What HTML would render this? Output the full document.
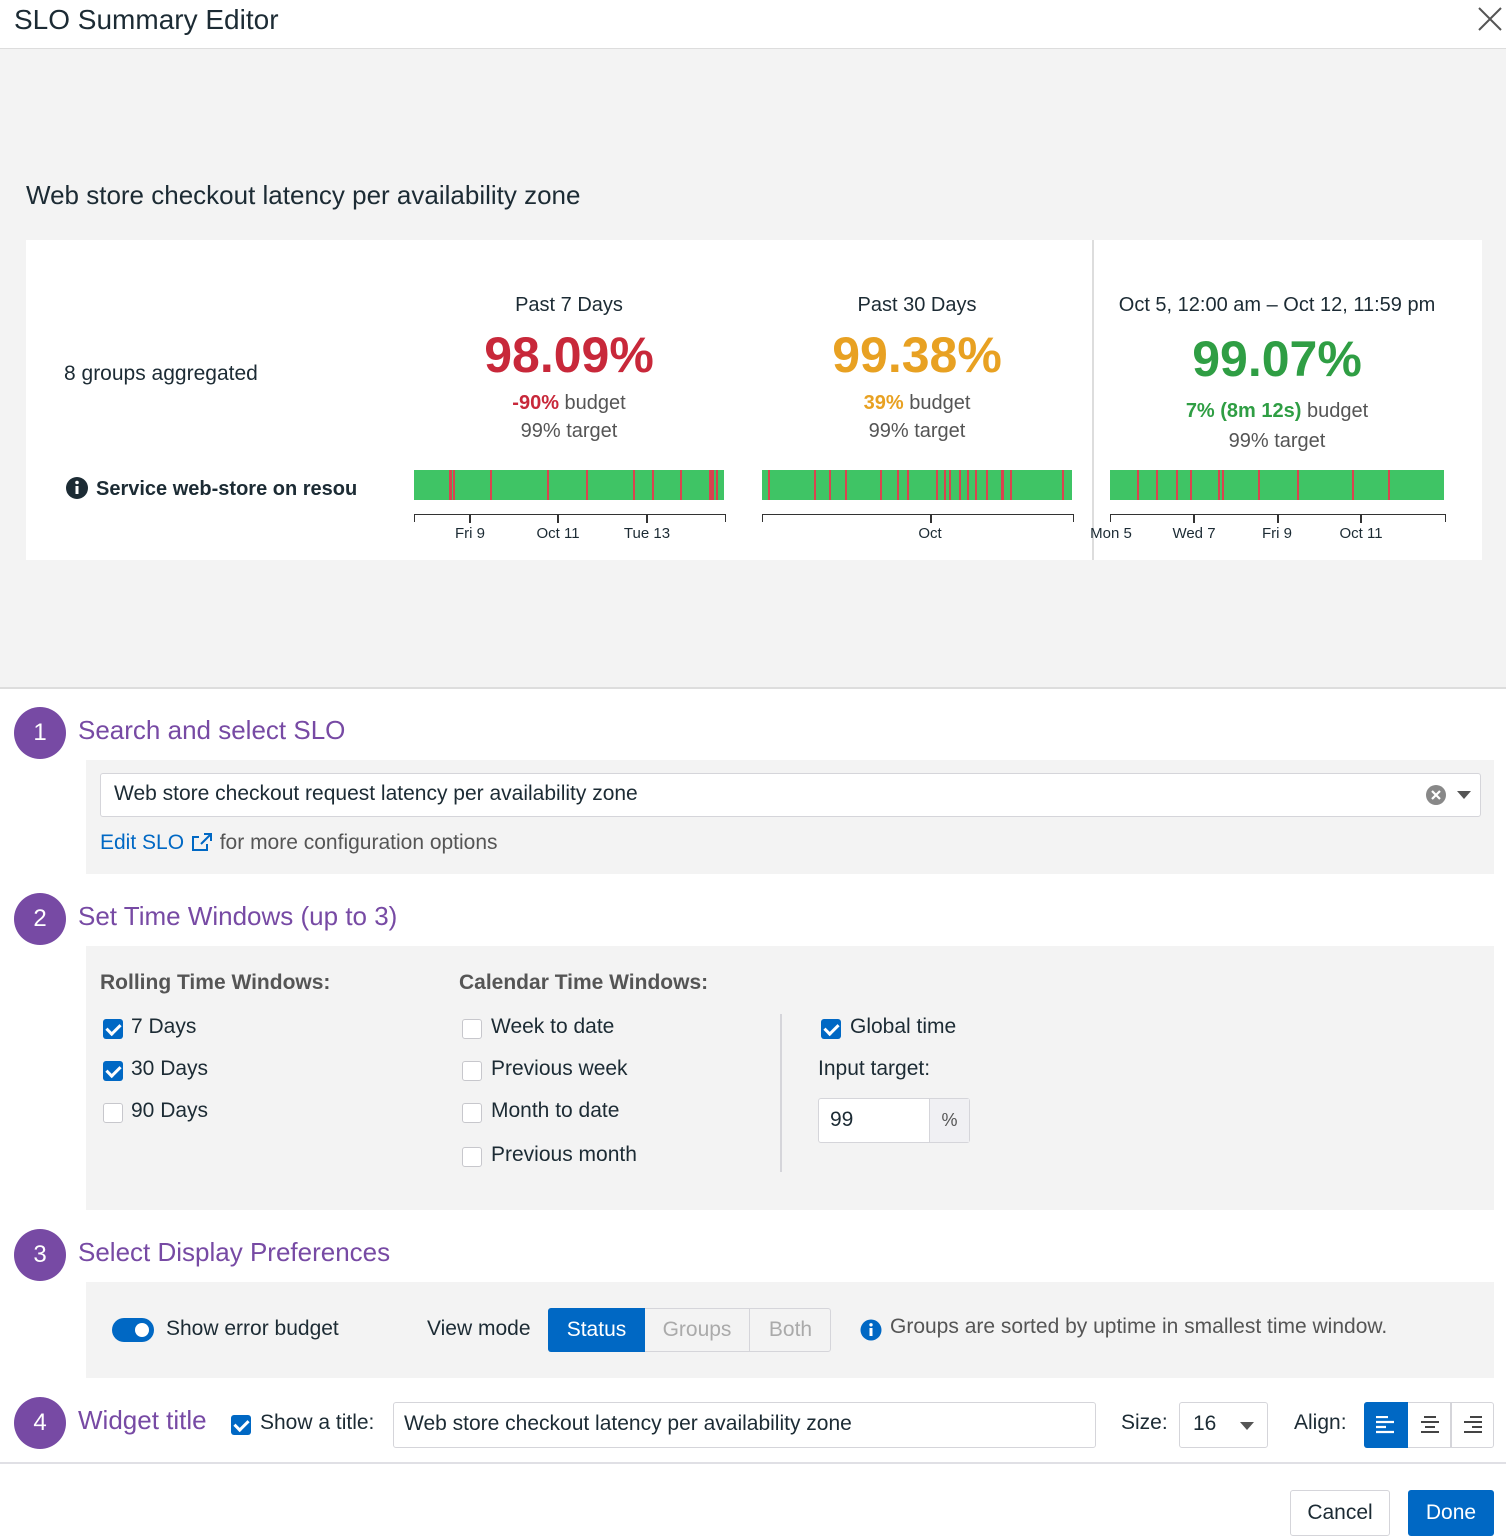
<!DOCTYPE html>
<html><head><meta charset="utf-8"><style>
*{box-sizing:border-box;margin:0;padding:0}
body{width:1506px;height:1536px;position:relative;background:#fff;font-family:"Liberation Sans",sans-serif;color:#1c2b34;overflow:hidden}
.a{position:absolute;white-space:nowrap}
.circ{position:absolute;width:52px;height:52px;border-radius:50%;background:#774aa4;color:#fff;font-size:24px;text-align:center;line-height:52px}
.sec{color:#774aa4;font-size:26px}
.grey{position:absolute;background:#f3f3f3}
.cb{position:absolute;width:20px;height:20px;border-radius:3px}
.cb.on{background:#0068c4}
.cb.on:after{content:"";position:absolute;left:6px;top:2px;width:6px;height:11px;border:solid #fff;border-width:0 3px 3px 0;transform:rotate(45deg)}
.cb.off{background:#fff;border:1.5px solid #c7c7cc}
.lbl{font-size:21px}
.bar{position:absolute;height:30px;background:#3fc465}
.bar i{position:absolute;top:0;height:30px;width:2px;background:#d9434f}
.ax{position:absolute;height:8px;border:1.5px solid #333;border-bottom:none}
.tk{position:absolute;top:0;width:1.5px;height:8px;background:#333}
.tl{position:absolute;font-size:15px;transform:translateX(-50%)}
</style></head><body>
<div class="a" style="left:14px;top:4px;font-size:28px">SLO Summary Editor</div>
<svg class="a" style="left:1477px;top:6px" width="26" height="26"><path d="M2 2L24 24M24 2L2 24" stroke="#555" stroke-width="2"/></svg>
<div class="grey" style="left:0;top:48px;width:1506px;height:641px;border-top:1px solid #ddd;border-bottom:2px solid #ddd"></div>
<div class="a" style="left:26px;top:180px;font-size:26px">Web store checkout latency per availability zone</div>
<div class="a" style="left:26px;top:240px;width:1456px;height:320px;background:#fff"></div>
<div class="a" style="left:1092px;top:240px;width:2px;height:320px;background:#ddd"></div>
<div class="a" style="left:64px;top:362px;font-size:21px">8 groups aggregated</div>
<svg class="a" style="left:65px;top:476px" width="24" height="24"><circle cx="12" cy="12" r="11" fill="#1c2b34"/><rect x="10.5" y="10" width="3" height="8" fill="#fff"/><circle cx="12" cy="6.5" r="1.8" fill="#fff"/></svg>
<div class="a" style="left:96px;top:478px;font-size:20px;font-weight:bold;width:280px;overflow:hidden">Service web-store on resou</div>

<div class="a" style="left:414px;width:310px;top:294px;text-align:center;font-size:20px">Past 7 Days</div>
<div class="a" style="left:414px;width:310px;top:326px;text-align:center;font-size:50px;font-weight:bold;color:#c8283a">98.09%</div>
<div class="a" style="left:414px;width:310px;top:392px;text-align:center;font-size:20px;color:#555"><b style="color:#c8283a">-90%</b> budget</div>
<div class="a" style="left:414px;width:310px;top:420px;text-align:center;font-size:20px;color:#555">99% target</div>

<div class="a" style="left:762px;width:310px;top:294px;text-align:center;font-size:20px">Past 30 Days</div>
<div class="a" style="left:762px;width:310px;top:326px;text-align:center;font-size:50px;font-weight:bold;color:#e8a122">99.38%</div>
<div class="a" style="left:762px;width:310px;top:392px;text-align:center;font-size:20px;color:#555"><b style="color:#e8a122">39%</b> budget</div>
<div class="a" style="left:762px;width:310px;top:420px;text-align:center;font-size:20px;color:#555">99% target</div>

<div class="a" style="left:1100px;width:354px;top:294px;text-align:center;font-size:20px">Oct 5, 12:00 am – Oct 12, 11:59 pm</div>
<div class="a" style="left:1100px;width:354px;top:330px;text-align:center;font-size:50px;font-weight:bold;color:#2f9e44">99.07%</div>
<div class="a" style="left:1100px;width:354px;top:400px;text-align:center;font-size:20px;color:#555"><b style="color:#2f9e44">7% (8m 12s)</b> budget</div>
<div class="a" style="left:1100px;width:354px;top:430px;text-align:center;font-size:20px;color:#555">99% target</div>

<div class="bar" style="left:414px;top:470px;width:310px"><i style="left:35px;width:3px"></i><i style="left:39px"></i><i style="left:76px"></i><i style="left:133px"></i><i style="left:172px"></i><i style="left:176px;width:0"></i><i style="left:219px"></i><i style="left:238px"></i><i style="left:266px"></i><i style="left:295px;width:5px"></i><i style="left:302px"></i></div>
<div class="ax" style="left:414px;top:514px;width:312px"><div class="tk" style="left:54px"></div><div class="tk" style="left:142px"></div><div class="tk" style="left:231px"></div></div>
<div class="tl" style="left:470px;top:525px">Fri 9</div><div class="tl" style="left:558px;top:525px">Oct 11</div><div class="tl" style="left:647px;top:525px">Tue 13</div>

<div class="bar" style="left:762px;top:470px;width:310px"><i style="left:6px"></i><i style="left:52px"></i><i style="left:67px"></i><i style="left:83px"></i><i style="left:118px"></i><i style="left:135px"></i><i style="left:145px"></i><i style="left:174px"></i><i style="left:182px"></i><i style="left:187px"></i><i style="left:197px"></i><i style="left:205px"></i><i style="left:213px"></i><i style="left:224px"></i><i style="left:239px;width:3px"></i><i style="left:248px"></i><i style="left:300px"></i></div>
<div class="ax" style="left:762px;top:514px;width:312px"><div class="tk" style="left:167px"></div></div>
<div class="tl" style="left:930px;top:525px">Oct</div>

<div class="bar" style="left:1110px;top:470px;width:334px"><i style="left:27px"></i><i style="left:46px"></i><i style="left:66px"></i><i style="left:80px"></i><i style="left:108px"></i><i style="left:112px"></i><i style="left:148px"></i><i style="left:187px"></i><i style="left:242px"></i><i style="left:278px"></i></div>
<div class="ax" style="left:1110px;top:514px;width:336px"><div class="tk" style="left:82px"></div><div class="tk" style="left:166px"></div><div class="tk" style="left:249px"></div></div>
<div class="tl" style="left:1111px;top:525px">Mon 5</div><div class="tl" style="left:1194px;top:525px">Wed 7</div><div class="tl" style="left:1277px;top:525px">Fri 9</div><div class="tl" style="left:1361px;top:525px">Oct 11</div>

<!-- section 1 -->
<div class="circ" style="left:14px;top:707px">1</div>
<div class="a sec" style="left:78px;top:715px">Search and select SLO</div>
<div class="grey" style="left:86px;top:760px;width:1408px;height:114px"></div>
<div class="a" style="left:100px;top:773px;width:1381px;height:44px;background:#fff;border:1.5px solid #d5d5da;border-radius:3px;font-size:21px;padding:8px 13px">Web store checkout request latency per availability zone</div>
<svg class="a" style="left:1425px;top:784px" width="22" height="22"><circle cx="11" cy="11" r="10" fill="#888"/><path d="M7 7L15 15M15 7L7 15" stroke="#fff" stroke-width="2.2"/></svg>
<svg class="a" style="left:1456px;top:790px" width="16" height="10"><path d="M1 1H15L8 9Z" fill="#555"/></svg>
<div class="a" style="left:100px;top:831px;font-size:21px;color:#555"><span style="color:#0068c4">Edit SLO</span> <svg width="24" height="20" style="vertical-align:-2px"><path d="M14 3H21V10M21 3L11 13M17 13V19H3V6H9" stroke="#0068c4" stroke-width="2" fill="none"/></svg> for more configuration options</div>

<!-- section 2 -->
<div class="circ" style="left:14px;top:893px">2</div>
<div class="a sec" style="left:78px;top:901px">Set Time Windows (up to 3)</div>
<div class="grey" style="left:86px;top:946px;width:1408px;height:264px"></div>
<div class="a lbl" style="left:100px;top:971px;font-weight:bold;color:#555">Rolling Time Windows:</div>
<div class="a lbl" style="left:459px;top:971px;font-weight:bold;color:#555">Calendar Time Windows:</div>
<div class="cb on" style="left:103px;top:1019px"></div><div class="a lbl" style="left:131px;top:1015px">7 Days</div>
<div class="cb on" style="left:103px;top:1061px"></div><div class="a lbl" style="left:131px;top:1057px">30 Days</div>
<div class="cb off" style="left:103px;top:1103px"></div><div class="a lbl" style="left:131px;top:1099px">90 Days</div>
<div class="cb off" style="left:462px;top:1019px"></div><div class="a lbl" style="left:491px;top:1015px">Week to date</div>
<div class="cb off" style="left:462px;top:1061px"></div><div class="a lbl" style="left:491px;top:1057px">Previous week</div>
<div class="cb off" style="left:462px;top:1103px"></div><div class="a lbl" style="left:491px;top:1099px">Month to date</div>
<div class="cb off" style="left:462px;top:1147px"></div><div class="a lbl" style="left:491px;top:1143px">Previous month</div>
<div class="a" style="left:780px;top:1014px;width:1.5px;height:158px;background:#d5d5da"></div>
<div class="cb on" style="left:821px;top:1019px"></div><div class="a lbl" style="left:850px;top:1015px">Global time</div>
<div class="a lbl" style="left:818px;top:1057px">Input target:</div>
<div class="a" style="left:818px;top:1098px;width:152px;height:45px;background:#fff;border:1.5px solid #d5d5da;border-radius:3px"></div>
<div class="a" style="left:929px;top:1099px;width:40px;height:43px;background:#f0f0f3;border-left:1.5px solid #d5d5da;text-align:center;line-height:43px;font-size:18px;color:#555">%</div>
<div class="a lbl" style="left:830px;top:1108px">99</div>

<!-- section 3 -->
<div class="circ" style="left:14px;top:1229px">3</div>
<div class="a sec" style="left:78px;top:1237px">Select Display Preferences</div>
<div class="grey" style="left:86px;top:1282px;width:1408px;height:96px"></div>
<div class="a" style="left:112px;top:1318px;width:42px;height:24px;border-radius:12px;background:#0068c4"><div style="position:absolute;right:5px;top:5px;width:14px;height:14px;border-radius:50%;background:#fff"></div></div>
<div class="a lbl" style="left:166px;top:1317px">Show error budget</div>
<div class="a lbl" style="left:427px;top:1317px">View mode</div>
<div class="a" style="left:548px;top:1308px;width:283px;height:44px;border:1.5px solid #d5d5da;border-radius:3px;background:#f3f3f3"></div>
<div class="a lbl" style="left:548px;top:1308px;width:97px;height:44px;background:#0068c4;color:#fff;text-align:center;line-height:44px;border-radius:3px 0 0 3px">Status</div>
<div class="a lbl" style="left:645px;top:1308px;width:105px;height:44px;color:#aaa;text-align:center;line-height:44px;border-right:1.5px solid #d5d5da">Groups</div>
<div class="a lbl" style="left:750px;top:1308px;width:81px;height:44px;color:#aaa;text-align:center;line-height:44px">Both</div>
<svg class="a" style="left:860px;top:1319px" width="22" height="22"><circle cx="11" cy="11" r="10.5" fill="#0068c4"/><rect x="9.5" y="9" width="3" height="8" fill="#fff"/><circle cx="11" cy="5.8" r="1.7" fill="#fff"/></svg>
<div class="a lbl" style="left:890px;top:1315px;color:#555">Groups are sorted by uptime in smallest time window.</div>

<!-- section 4 -->
<div class="circ" style="left:14px;top:1397px">4</div>
<div class="a sec" style="left:78px;top:1405px">Widget title</div>
<div class="cb on" style="left:231px;top:1415px"></div>
<div class="a lbl" style="left:260px;top:1411px">Show a title:</div>
<div class="a lbl" style="left:393px;top:1402px;width:703px;height:46px;border:1.5px solid #d5d5da;border-radius:3px;padding:9px 10px">Web store checkout latency per availability zone</div>
<div class="a lbl" style="left:1121px;top:1411px">Size:</div>
<div class="a lbl" style="left:1179px;top:1402px;width:89px;height:46px;border:1.5px solid #d5d5da;border-radius:3px;padding:9px 13px">16</div>
<svg class="a" style="left:1239px;top:1421px" width="16" height="10"><path d="M1 1H15L8 9Z" fill="#555"/></svg>
<div class="a lbl" style="left:1294px;top:1411px">Align:</div>
<div class="a" style="left:1364px;top:1402px;width:130px;height:46px;border:1.5px solid #d5d5da;border-radius:3px"></div>
<div class="a" style="left:1364px;top:1402px;width:44px;height:46px;background:#0068c4;border-radius:3px 0 0 3px"></div>
<div class="a" style="left:1450px;top:1402px;width:1.5px;height:46px;background:#d5d5da"></div>
<svg class="a" style="left:1376px;top:1416px" width="20" height="18"><path d="M0 1H12M0 6H18M0 11H10M0 16H18" stroke="#fff" stroke-width="2.2"/></svg>
<svg class="a" style="left:1420px;top:1416px" width="20" height="18"><path d="M4 1H16M1 6H19M5 11H15M1 16H19" stroke="#444" stroke-width="2"/></svg>
<svg class="a" style="left:1462px;top:1416px" width="20" height="18"><path d="M8 1H20M2 6H20M10 11H20M2 16H20" stroke="#444" stroke-width="2"/></svg>
<div class="a" style="left:0;top:1462px;width:1506px;height:2px;background:#e0e0e5"></div>
<div class="a lbl" style="left:1290px;top:1490px;width:100px;height:46px;border:1.5px solid #d5d5da;border-radius:3px;text-align:center;line-height:44px">Cancel</div>
<div class="a lbl" style="left:1408px;top:1490px;width:86px;height:46px;background:#0068c4;color:#fff;border-radius:3px;text-align:center;line-height:46px">Done</div>
</body></html>
